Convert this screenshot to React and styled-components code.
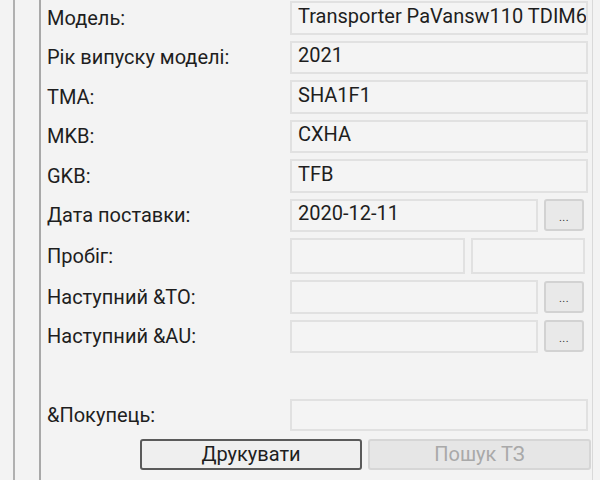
import React from "react";
import styled, { createGlobalStyle } from "styled-components";

const Global = createGlobalStyle`
  html, body { margin: 0; padding: 0; background: #f3f3f3; }
  body { font-family: Roboto, "Noto Sans", sans-serif; width: 600px; height: 480px; overflow: hidden; }
`;

const Page = styled.div`
  display: flex;
  height: 480px;
  background: #f3f3f3;
`;

const Gutter = styled.div`
  width: 13px;
  flex: none;
`;

const Strip = styled.div`
  width: 24px;
  flex: none;
  border-left: 2px solid #b0b0b0;
  border-right: 2px solid #a8a8a8;
`;

const Panel = styled.div`
  width: 552px;
  flex: none;
  border-right: 1px solid #d9d9d9;
  padding: 1px 0 0 6px;
  box-sizing: border-box;
`;

const Form = styled.div`
  display: grid;
  grid-template-columns: 243px 298px;
  row-gap: 6px;
  align-items: center;
`;

const Label = styled.div`
  font-size: 20px;
  color: #1e1e1e;
  white-space: nowrap;
`;

const FieldRow = styled.div`
  display: flex;
  gap: 6px;
  align-items: center;
`;

const Field = styled.div`
  flex: ${(p) => p.$flex || 1};
  min-width: 0;
  height: ${(p) => p.$h || 33.5}px;
  box-sizing: border-box;
  border: 2px solid #e1e1e1;
  background: #f4f4f4;
  font-size: 20px;
  color: #1e1e1e;
  padding: 0 0 4px 6px;
  display: flex;
  align-items: center;
  white-space: nowrap;
  overflow: hidden;
`;

const DotsButton = styled.div`
  flex: none;
  width: 40px;
  height: 32px;
  margin-right: 4px;
  box-sizing: border-box;
  border: 2px solid #d2d2d2;
  border-radius: 3px;
  background: #e9e9e9;
  display: flex;
  align-items: center;
  justify-content: center;
  padding-top: 4px;
  font-size: 11px;
  color: #333;
  letter-spacing: 0.5px;
`;

const Spacer = styled.div`
  grid-column: 1 / span 2;
  height: 33.5px;
`;

const Buttons = styled.div`
  display: flex;
  gap: 6px;
  margin: 8px 0 0 93px;
`;

const Button = styled.div`
  width: ${(p) => p.$w}px;
  height: 31px;
  box-sizing: border-box;
  border-radius: 3px;
  border: 2px solid ${(p) => (p.$disabled ? "#d6d6d6" : "#5a5a5a")};
  background: ${(p) => (p.$disabled ? "#e6e6e6" : "#efefef")};
  color: ${(p) => (p.$disabled ? "#a9a9a9" : "#1e1e1e")};
  font-size: 20px;
  display: flex;
  align-items: center;
  justify-content: center;
`;

const rows = [
  { label: "Модель:", value: "Transporter PaVansw110 TDIM6" },
  { label: "Рік випуску моделі:", value: "2021" },
  { label: "TMA:", value: "SHA1F1" },
  { label: "MKB:", value: "CXHA" },
  { label: "GKB:", value: "TFB" },
  { label: "Дата поставки:", value: "2020-12-11", dots: true },
  { label: "Пробіг:", split: true },
  { label: "Наступний &TO:", value: "", dots: true },
  { label: "Наступний &AU:", value: "", dots: true },
];

export default function App() {
  return (
    <>
      <Global />
      <Page>
        <Gutter />
        <Strip />
        <Panel>
          <Form>
            {rows.map((r) => (
              <React.Fragment key={r.label}>
                <Label>{r.label}</Label>
                {r.split ? (
                  <FieldRow>
                    <Field $h={36} $flex={177} />
                    <Field $h={36} $flex={111} style={{ marginRight: 3 }} />
                  </FieldRow>
                ) : (
                  <FieldRow>
                    <Field>{r.value}</Field>
                    {r.dots && <DotsButton>...</DotsButton>}
                  </FieldRow>
                )}
              </React.Fragment>
            ))}
            <Spacer />
            <Label>&amp;Покупець:</Label>
            <FieldRow>
              <Field $h={32} />
            </FieldRow>
          </Form>
          <Buttons>
            <Button $w={222}>Друкувати</Button>
            <Button $w={223} $disabled>Пошук ТЗ</Button>
          </Buttons>
        </Panel>
      </Page>
    </>
  );
}
